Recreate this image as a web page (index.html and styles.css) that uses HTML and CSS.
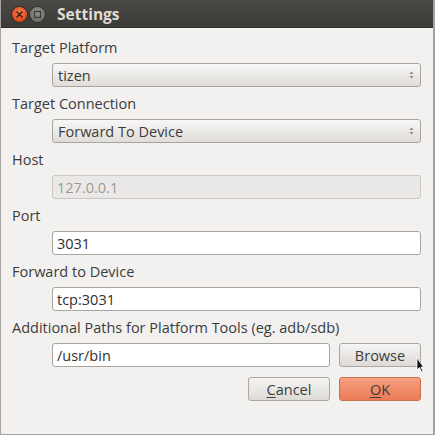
FILE: index.html
```html
<!DOCTYPE html>
<html>
<head>
<meta charset="utf-8">
<link rel="stylesheet" href="styles.css">
</head>
<body>
<div class="window">
  <div class="titlebar">
    <span class="wbtn close"><svg width="15" height="15" viewBox="0 0 15 15"><path d="M5 5 L10 10 M10 5 L5 10" stroke="#3a1a10" stroke-width="1.4" stroke-linecap="round"/></svg></span>
    <span class="wbtn max"><svg width="15" height="15" viewBox="0 0 15 15"><rect x="4.5" y="4.5" width="6" height="6" fill="none" stroke="#3c3b37" stroke-width="1.2"/></svg></span>
    <span class="title">Settings</span>
  </div>
  <div class="content">
    <div class="label">Target Platform</div>
    <div class="row"><div class="combo"><span>tizen</span><svg class="arrows" width="7" height="12" viewBox="0 0 7 12"><path d="M1.5 5 L3.5 2.5 L5.5 5Z M1.5 7 L3.5 9.5 L5.5 7Z" fill="#8a8884"/></svg></div></div>
    <div class="label">Target Connection</div>
    <div class="row"><div class="combo"><span>Forward To Device</span><svg class="arrows" width="7" height="12" viewBox="0 0 7 12"><path d="M1.5 5 L3.5 2.5 L5.5 5Z M1.5 7 L3.5 9.5 L5.5 7Z" fill="#8a8884"/></svg></div></div>
    <div class="label">Host</div>
    <div class="row"><div class="input disabled">127.0.0.1</div></div>
    <div class="label">Port</div>
    <div class="row"><div class="input">3031</div></div>
    <div class="label">Forward to Device</div>
    <div class="row"><div class="input">tcp:3031</div></div>
    <div class="label">Additional Paths for Platform Tools (eg. adb/sdb)</div>
    <div class="row"><div class="input path">/usr/bin</div><div class="button">Browse</div></div>
    <div class="row actions"><div class="button"><u>C</u>ancel</div><div class="button ok"><u>O</u>K</div></div>
  </div>
  <svg class="cursor" width="8" height="16" viewBox="0 0 8 16"><path d="M1 1 L1 13 L3.5 10.5 L5.5 15 L7 14.3 L5 10 L7.5 10 Z" fill="#111" stroke="#fff" stroke-width="0.8"/></svg>
</div>
</body>
</html>
```
FILE: styles.css
```css
html, body { margin: 0; padding: 0; background: #f2f1f0; }
body { font-family: "Open Sans", "Noto Sans", sans-serif; font-size: 14.5px; color: #3c3c3c; }
.window {
  position: relative;
  width: 435px; height: 435px; box-sizing: border-box;
  background: #f2f1f0;
  border-left: 1px solid #a5a29d; border-right: 2px solid #a5a29d; border-bottom: 1px solid #a5a29d;
  overflow: hidden;
}
.titlebar {
  height: 28px; margin: 0 -2px 0 -1px;
  background: linear-gradient(#4a4945, #3c3b37);
  display: flex; align-items: center; padding-left: 12px; gap: 3px;
  border-bottom: 1px solid #2d2c29; box-sizing: border-box;
}
.wbtn { width: 15px; height: 15px; border-radius: 50%; display: flex; margin-top: 2px; }
.close { background: radial-gradient(circle at 50% 35%, #f47a4f, #df4a1e 70%, #b9391a); box-shadow: 0 0 0 1px #2f2e2b; }
.max { background: radial-gradient(circle at 50% 35%, #8f8d88, #6f6d68 80%); box-shadow: 0 0 0 1px #2f2e2b; }
.title { color: #dfdbd2; font-weight: bold; font-size: 15.5px; margin-left: 9px; margin-top: 1px; }
.content { padding: 3px 12px 0 11px; display: flex; flex-direction: column; }
.label { height: 32px; display: flex; align-items: center; font-size: 14.5px; color: #3c3c3c; }
.row { display: flex; padding-left: 40px; gap: 9px; }
.combo, .input, .button { box-sizing: border-box; height: 24px; display: flex; align-items: center; font-size: 14.5px; }
.combo {
  flex: 1; border: 1px solid #a8a49f; border-radius: 3px;
  background: linear-gradient(#f8f7f6, #e0ddd9);
  padding: 0 5px; justify-content: space-between; color: #3c3c3c;
}
.arrows { margin-right: 0; }
.input {
  flex: 1; background: #fff; border: 1px solid #a8a49f; border-radius: 3px;
  padding-left: 4px; color: #2f2f2f;
}
.input.disabled { background: #ebe9e7; border-color: #cac7c2; color: #9c9a96; }
.input.path { flex: 0 0 278px; }
.button {
  width: 82px; justify-content: center;
  border: 1px solid #aba7a1; border-radius: 3px;
  background: linear-gradient(#f6f5f4, #dddad6); color: #3c3c3c;
}
.actions { justify-content: flex-end; margin-top: 10px; }
.button u { text-decoration-thickness: 1px; text-underline-offset: 2px; }
.button.ok { background: linear-gradient(#f6a080, #ea7a55); border-color: #c9704f; }
.cursor { position: absolute; left: 415px; top: 357px; }
```
